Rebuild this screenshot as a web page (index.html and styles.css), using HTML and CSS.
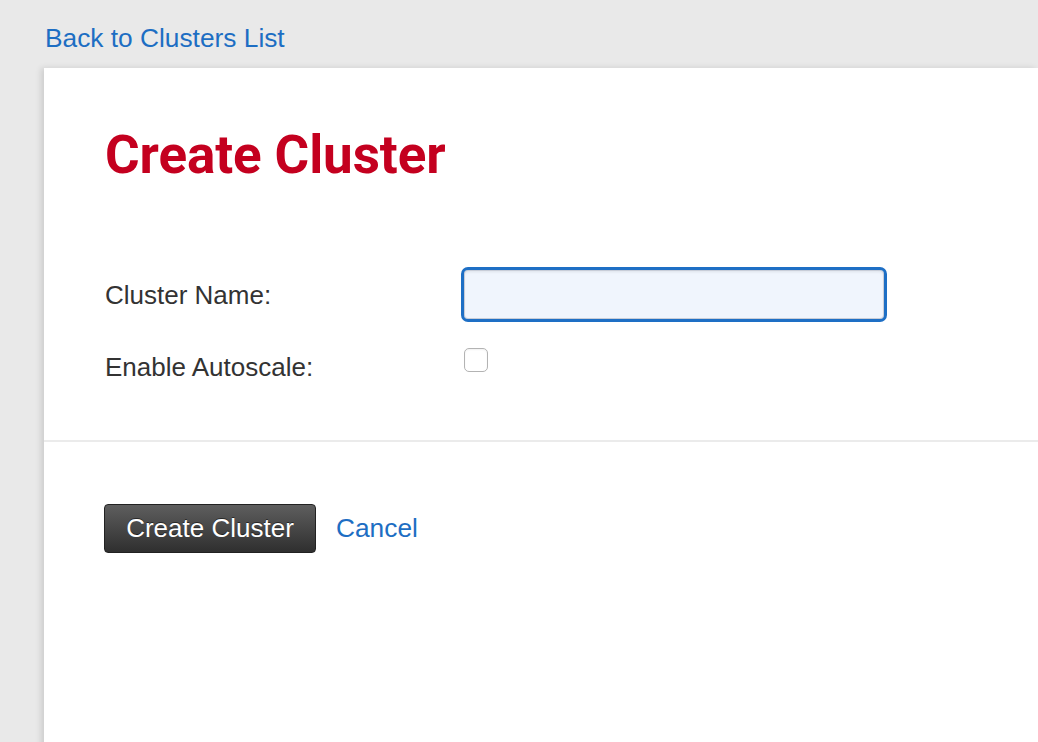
FILE: index.html
```html
<!DOCTYPE html>
<html>
<head>
<meta charset="utf-8">
<title>Create Cluster</title>
<link rel="stylesheet" href="styles.css">
</head>
<body>
<div class="top">
  <a class="link back" href="#">Back to Clusters List</a>
</div>
<main class="panel">
  <h1 class="title">Create Cluster</h1>
  <form class="form">
    <div class="row">
      <label class="label" for="name">Cluster Name:</label>
      <input class="text-input" id="name" type="text">
    </div>
    <div class="row row-check">
      <label class="label" for="auto">Enable Autoscale:</label>
      <input class="check" id="auto" type="checkbox">
    </div>
  </form>
  <div class="divider"></div>
  <div class="actions">
    <button class="btn" type="button">Create Cluster</button>
    <a class="link cancel" href="#">Cancel</a>
  </div>
</main>
</body>
</html>
```
FILE: styles.css
```css
html, body {
  margin: 0;
  padding: 0;
}
body {
  background: #e9e9e9;
  font-family: "Liberation Sans", Arial, sans-serif;
  color: #333;
  overflow: hidden;
  height: 742px;
}
.top {
  padding: 22px 0 0 45px;
  height: 32px;
}
.link {
  color: #1d6ec3;
  text-decoration: none;
  font-size: 26.3px;
  line-height: 32px;
}
.panel {
  margin: 14px 0 0 44px;
  background: #fff;
  min-height: 700px;
  box-shadow: -3px 0 6px rgba(0, 0, 0, 0.12);
}
.title {
  margin: 0;
  padding: 61px 0 0 61px;
  font-family: Roboto, "Liberation Sans", sans-serif;
  font-weight: 700;
  font-size: 53px;
  line-height: 53px;
  color: #c4001f;
  letter-spacing: -0.1px;
}
.form {
  padding: 85px 0 0 61px;
  display: flex;
  flex-direction: column;
  gap: 26px;
}
.row {
  display: flex;
  align-items: center;
  height: 55px;
}
.row-check {
  height: auto;
  align-items: flex-start;
}
.label {
  width: 356px;
  font-size: 26px;
  line-height: 30px;
  color: #333;
}
.row-check .label {
  padding-top: 4px;
}
.text-input {
  box-sizing: border-box;
  width: 426px;
  height: 55px;
  margin: 0;
  border: 3px solid #1e6fc5;
  border-radius: 7px;
  background: #f0f5fd;
  box-shadow: inset 0 0 0 1px #c8cdd8, inset 0 2px 3px rgba(0, 0, 0, 0.08);
  outline: none;
  font-size: 24px;
  padding: 0 10px;
}
.check {
  appearance: none;
  -webkit-appearance: none;
  box-sizing: border-box;
  width: 24px;
  height: 24px;
  margin: 0 0 0 3px;
  border: 1px solid #b3b3b3;
  border-radius: 5px;
  background: #fff;
  box-shadow: inset 0 1px 2px rgba(0, 0, 0, 0.06);
}
.divider {
  margin-top: 58px;
  height: 2px;
  background: #ebebeb;
}
.actions {
  display: flex;
  align-items: center;
  gap: 20px;
  padding: 62px 0 0 60px;
}
.btn {
  box-sizing: border-box;
  width: 212px;
  height: 49px;
  margin: 0;
  padding: 0;
  border: 1px solid #222;
  border-radius: 4px;
  background: linear-gradient(#5e5e5e, #2f2f2f);
  color: #fff;
  font-family: "Liberation Sans", Arial, sans-serif;
  font-size: 26px;
  text-shadow: 0 -1px 0 rgba(0, 0, 0, 0.5);
  cursor: pointer;
}
.cancel {
  line-height: 49px;
}
```
